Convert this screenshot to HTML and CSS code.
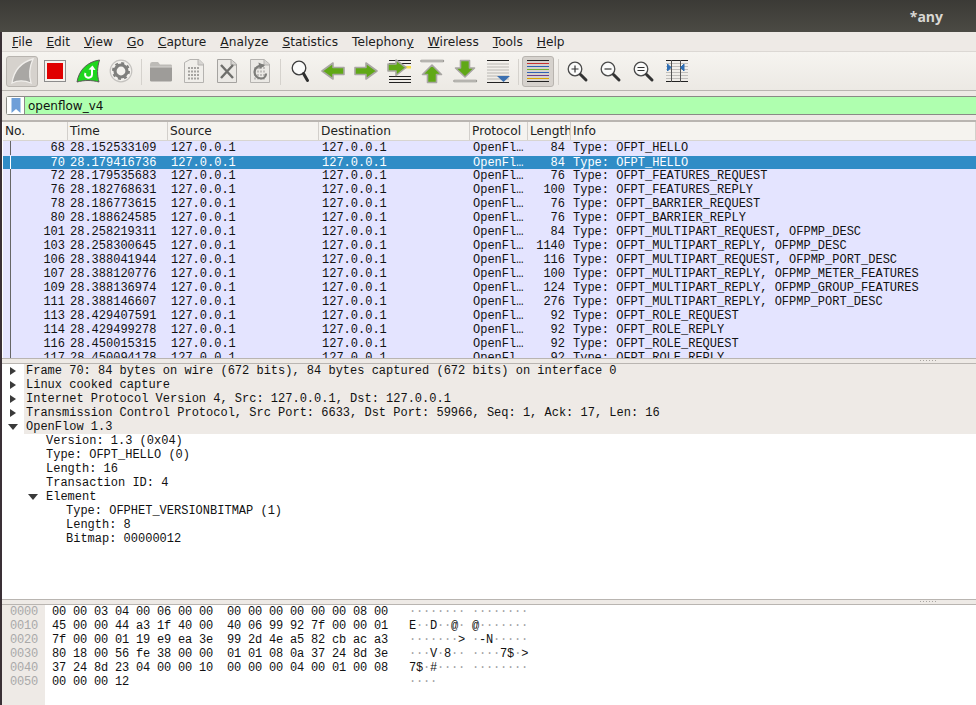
FILE: index.html
```html
<!DOCTYPE html>
<html lang="en">
<head>
    <meta charset="UTF-8">
    <meta name="viewport" content="width=device-width, initial-scale=1.0">
    <title>*any</title>
    <link rel="stylesheet" href="styles.css">
</head>
<body>
    <div class="title-bar"><span class="title-text">*any</span></div>

    <div class="window">
        <div class="menu-bar">
            <a class="menu-item"><u>F</u>ile</a>
            <a class="menu-item"><u>E</u>dit</a>
            <a class="menu-item"><u>V</u>iew</a>
            <a class="menu-item"><u>G</u>o</a>
            <a class="menu-item"><u>C</u>apture</a>
            <a class="menu-item"><u>A</u>nalyze</a>
            <a class="menu-item"><u>S</u>tatistics</a>
            <a class="menu-item">Telephon<u>y</u></a>
            <a class="menu-item"><u>W</u>ireless</a>
            <a class="menu-item"><u>T</u>ools</a>
            <a class="menu-item"><u>H</u>elp</a>
        </div>

        <div class="tool-bar">
            <!-- Start capture (disabled) -->
            <div class="tool toggled">
                <svg viewBox="0 0 32 31"><path d="M6 27C8 14 16 6 27 3C23 12 23 20 25 27C18 24 12 24 6 27Z" fill="#a9a7a4" stroke="#f0eeeb" stroke-width="1.3"/></svg>
            </div>
            <!-- Stop -->
            <div class="tool">
                <svg viewBox="0 0 32 31"><rect x="5.500" y="4.500" width="21" height="21" fill="#f4f2ee" stroke="#8c8c8c"/><rect x="8" y="7" width="16" height="16" fill="#e00000"/></svg>
            </div>
            <!-- Restart -->
            <div class="tool">
                <svg viewBox="0 0 32 31"><path d="M5 26C7 14 15 6 27.500 4C25 12 25 19 27 26C20 24 12 24 5 26Z" fill="#1ed61e" stroke="#5a5a56" stroke-width="1"/><path d="M20 12.500V18.500C20 21 17.500 22 15.500 21.500C13.500 21 12.500 19 13.500 17" fill="none" stroke="#fff" stroke-width="2"/><path d="M16.500 13.500L20.500 9.500L23.500 14Z" fill="#fff"/></svg>
            </div>
            <!-- Options -->
            <div class="tool">
                <svg viewBox="0 0 32 31"><circle cx="16" cy="15" r="10.800" fill="#f4f2ee" stroke="#c4c2bf" stroke-width="1.200"/><circle cx="16" cy="15" r="6" fill="none" stroke="#7f7f7d" stroke-width="3.200"/><circle cx="16" cy="15" r="8" fill="none" stroke="#7f7f7d" stroke-width="2" stroke-dasharray="3 3.280"/></svg>
            </div>
            <div class="tool-sep"></div>
            <!-- Open -->
            <div class="tool">
                <svg viewBox="0 0 32 31"><path d="M5 8.500Q5 6 7 6H13L15 8.500H26Q27 8.500 27 10V25H5Z" fill="#bdbbb7"/><path d="M5 11H27V24Q27 25.500 25.500 25.500H6.500Q5 25.500 5 24Z" fill="#9e9c99"/><path d="M5 11H27" stroke="#d5d3d0"/></svg>
            </div>
            <!-- Save -->
            <div class="tool">
                <svg viewBox="0 0 32 31"><path d="M6.500 6.500L12 3.500H21L25.500 8V26.500H6.500Z" fill="#f0eeea" stroke="#b5b3b0"/><path d="M20 3.500V9H25.500" fill="#d5d3d0" stroke="#b5b3b0"/><path d="M10 12H22M10 15.500H22M10 19H22M10 22.500H22" stroke="#a5a3a0" stroke-width="2" stroke-dasharray="2 1"/></svg>
            </div>
            <!-- Close -->
            <div class="tool">
                <svg viewBox="0 0 32 31"><path d="M6.500 3.500H20L25.500 8V26.500H6.500Z" fill="#ebe9e5" stroke="#a5a3a0"/><path d="M20 3.500V9H25.500" fill="#d5d3d0" stroke="#a5a3a0"/><path d="M10 9L22 22M22 9L10 22" stroke="#6f6f6c" stroke-width="2.400"/></svg>
            </div>
            <!-- Reload -->
            <div class="tool">
                <svg viewBox="0 0 32 31"><path d="M6.500 3.500H20L25.500 8V26.500H6.500Z" fill="#ebe9e5" stroke="#b5b3b0"/><path d="M20 3.500V9H25.500" fill="#d5d3d0" stroke="#b5b3b0"/><path d="M10 12H22M10 15.500H22M10 19H22M10 22.500H22" stroke="#c0bebb" stroke-width="2" stroke-dasharray="2 1"/><path d="M20 9.500C15 8.500 10.500 12 10.500 16C10.500 20 14 22.500 17 22.500C20 22.500 22 20 22 17.500" fill="none" stroke="#7d7d7a" stroke-width="2.200"/><path d="M14.500 6.500L21 9.500L15.500 13Z" fill="#7d7d7a"/></svg>
            </div>
            <div class="tool-sep"></div>
            <!-- Find -->
            <div class="tool">
                <svg viewBox="0 0 32 31"><circle cx="15" cy="12" r="6.800" fill="#fbfbfa" stroke="#3c3c3c" stroke-width="1.300"/><path d="M19.500 17.500L23.500 24.500" stroke="#2e2e2e" stroke-width="3" stroke-linecap="round"/></svg>
            </div>
            <!-- Back -->
            <div class="tool">
                <svg viewBox="0 0 32 31"><path d="M27 11.500H16V7L5 15L16 23V18.500H27Z" fill="#60a816" stroke="#a8a6a2" stroke-width="1.600" stroke-linejoin="round"/></svg>
            </div>
            <!-- Forward -->
            <div class="tool">
                <svg viewBox="0 0 32 31"><path d="M5 11.500H16V7L27 15L16 23V18.500H5Z" fill="#60a816" stroke="#a8a6a2" stroke-width="1.600" stroke-linejoin="round"/></svg>
            </div>
            <!-- Go to packet -->
            <div class="tool">
                <svg viewBox="0 0 32 31"><path d="M6 4.500H28M6 7.500H28M6 20.500H28M6 23.500H28M6 26.500H28" stroke="#222" stroke-width="1.200"/><path d="M21 10H28V12.500H21Z" fill="#f6e04a"/><path d="M5 8H13V4L23 11.500L13 19.500V15H5Z" fill="#60a816" stroke="#a8a6a2" stroke-width="1.600" stroke-linejoin="round"/></svg>
            </div>
            <!-- First packet -->
            <div class="tool">
                <svg viewBox="0 0 32 31"><path d="M5.500 5H27" stroke="#8c8a86" stroke-width="2.400" stroke-linecap="round"/><path d="M5.500 5H27" stroke="#f4f2ee" stroke-width="0.800" stroke-linecap="round"/><path d="M16 9L25.500 18.500H20.500V26.500H11.500V18.500H6.500Z" fill="#60a816" stroke="#a8a6a2" stroke-width="1.600" stroke-linejoin="round"/></svg>
            </div>
            <!-- Last packet -->
            <div class="tool">
                <svg viewBox="0 0 32 31"><path d="M5.500 25H27" stroke="#8c8a86" stroke-width="2.400" stroke-linecap="round"/><path d="M5.500 25H27" stroke="#f4f2ee" stroke-width="0.800" stroke-linecap="round"/><path d="M16 21L25.500 12H20.500V4.500H11.500V12H6.500Z" fill="#60a816" stroke="#a8a6a2" stroke-width="1.600" stroke-linejoin="round"/></svg>
            </div>
            <!-- Auto scroll -->
            <div class="tool">
                <svg viewBox="0 0 32 31"><path d="M5 4.500H27M5 26.500H27" stroke="#222" stroke-width="1.200"/><path d="M5 8H27M5 11H27M5 14H27M5 17H27M5 20H27M5 23H27" stroke="#b8b6b2"/><path d="M15 20H28L21.500 26Z" fill="#3a6fb0"/></svg>
            </div>
            <div class="tool-sep"></div>
            <!-- Colorize -->
            <div class="tool toggled">
                <svg viewBox="0 0 32 31"><path d="M5 4.500H27" stroke="#222"/><path d="M5 7.500H27" stroke="#c83232"/><path d="M5 10.500H27" stroke="#2f62b5"/><path d="M5 13.500H27" stroke="#73b32e"/><path d="M5 16.500H27" stroke="#2f62b5"/><path d="M5 19.500H27" stroke="#6b3f90"/><path d="M5 22.500H27" stroke="#d9a400"/><path d="M5 25.500H27" stroke="#222"/></svg>
            </div>
            <div class="tool-sep"></div>
            <!-- Zoom in -->
            <div class="tool">
                <svg viewBox="0 0 32 31"><circle cx="13" cy="13" r="6.800" fill="#fbfbfa" stroke="#4a4a4a" stroke-width="1.300"/><path d="M9.500 13H16.500M13 9.500V16.500" stroke="#333" stroke-width="1.200"/><path d="M18.500 18.500L24 24" stroke="#333" stroke-width="3" stroke-linecap="round"/></svg>
            </div>
            <!-- Zoom out -->
            <div class="tool">
                <svg viewBox="0 0 32 31"><circle cx="13" cy="13" r="6.800" fill="#fbfbfa" stroke="#4a4a4a" stroke-width="1.300"/><path d="M9.500 13H16.500" stroke="#333" stroke-width="1.200"/><path d="M18.500 18.500L24 24" stroke="#333" stroke-width="3" stroke-linecap="round"/></svg>
            </div>
            <!-- Normal size -->
            <div class="tool">
                <svg viewBox="0 0 32 31"><circle cx="13" cy="13" r="6.800" fill="#fbfbfa" stroke="#4a4a4a" stroke-width="1.300"/><path d="M9.500 11.500H16.500M9.500 14.500H16.500" stroke="#333" stroke-width="1.200"/><path d="M18.500 18.500L24 24" stroke="#333" stroke-width="3" stroke-linecap="round"/></svg>
            </div>
            <!-- Resize columns -->
            <div class="tool">
                <svg viewBox="0 0 32 31"><path d="M5 7.500H27M5 10.500H27M5 13.500H27M5 16.500H27M5 19.500H27M5 22.500H27" stroke="#c0bebb"/><path d="M5 4.500H27M5 25.500H27" stroke="#222" stroke-width="1.200"/><path d="M10.500 4V26M19.500 4V26" stroke="#555" stroke-width="1"/><path d="M6.500 8V15L10 11.500ZM23 8V15L19.500 11.500Z" fill="#2f6fb5" stroke="#2f6fb5"/></svg>
            </div>
        </div>

        <div class="filter-bar">
            <div class="filter-box">
                <div class="filter-mark">
                    <svg viewBox="0 0 10 15"><path d="M0.500 0H9.500V15L5 11L0.500 15Z" fill="#6f9fd8"/></svg>
                </div>
                <div class="filter-text">openflow_v4</div>
            </div>
        </div>

        <div class="packet-pane">
            <div class="col-head">
                <div class="head-cell">No.</div>
                <div class="head-cell">Time</div>
                <div class="head-cell">Source</div>
                <div class="head-cell">Destination</div>
                <div class="head-cell">Protocol</div>
                <div class="head-cell">Length</div>
                <div class="head-cell">Info</div>
            </div>
            <div class="packet-list">
                <div class="packet"><span class="c-no">68</span><span class="c-time">28.152533109</span><span>127.0.0.1</span><span>127.0.0.1</span><span>OpenFl…</span><span class="c-len">84</span><span>Type: OFPT_HELLO</span></div>
                <div class="packet selected"><span class="c-no">70</span><span class="c-time">28.179416736</span><span>127.0.0.1</span><span>127.0.0.1</span><span>OpenFl…</span><span class="c-len">84</span><span>Type: OFPT_HELLO</span></div>
                <div class="packet"><span class="c-no">72</span><span class="c-time">28.179535683</span><span>127.0.0.1</span><span>127.0.0.1</span><span>OpenFl…</span><span class="c-len">76</span><span>Type: OFPT_FEATURES_REQUEST</span></div>
                <div class="packet"><span class="c-no">76</span><span class="c-time">28.182768631</span><span>127.0.0.1</span><span>127.0.0.1</span><span>OpenFl…</span><span class="c-len">100</span><span>Type: OFPT_FEATURES_REPLY</span></div>
                <div class="packet"><span class="c-no">78</span><span class="c-time">28.186773615</span><span>127.0.0.1</span><span>127.0.0.1</span><span>OpenFl…</span><span class="c-len">76</span><span>Type: OFPT_BARRIER_REQUEST</span></div>
                <div class="packet"><span class="c-no">80</span><span class="c-time">28.188624585</span><span>127.0.0.1</span><span>127.0.0.1</span><span>OpenFl…</span><span class="c-len">76</span><span>Type: OFPT_BARRIER_REPLY</span></div>
                <div class="packet"><span class="c-no">101</span><span class="c-time">28.258219311</span><span>127.0.0.1</span><span>127.0.0.1</span><span>OpenFl…</span><span class="c-len">84</span><span>Type: OFPT_MULTIPART_REQUEST, OFPMP_DESC</span></div>
                <div class="packet"><span class="c-no">103</span><span class="c-time">28.258300645</span><span>127.0.0.1</span><span>127.0.0.1</span><span>OpenFl…</span><span class="c-len">1140</span><span>Type: OFPT_MULTIPART_REPLY, OFPMP_DESC</span></div>
                <div class="packet"><span class="c-no">106</span><span class="c-time">28.388041944</span><span>127.0.0.1</span><span>127.0.0.1</span><span>OpenFl…</span><span class="c-len">116</span><span>Type: OFPT_MULTIPART_REQUEST, OFPMP_PORT_DESC</span></div>
                <div class="packet"><span class="c-no">107</span><span class="c-time">28.388120776</span><span>127.0.0.1</span><span>127.0.0.1</span><span>OpenFl…</span><span class="c-len">100</span><span>Type: OFPT_MULTIPART_REPLY, OFPMP_METER_FEATURES</span></div>
                <div class="packet"><span class="c-no">109</span><span class="c-time">28.388136974</span><span>127.0.0.1</span><span>127.0.0.1</span><span>OpenFl…</span><span class="c-len">124</span><span>Type: OFPT_MULTIPART_REPLY, OFPMP_GROUP_FEATURES</span></div>
                <div class="packet"><span class="c-no">111</span><span class="c-time">28.388146607</span><span>127.0.0.1</span><span>127.0.0.1</span><span>OpenFl…</span><span class="c-len">276</span><span>Type: OFPT_MULTIPART_REPLY, OFPMP_PORT_DESC</span></div>
                <div class="packet"><span class="c-no">113</span><span class="c-time">28.429407591</span><span>127.0.0.1</span><span>127.0.0.1</span><span>OpenFl…</span><span class="c-len">92</span><span>Type: OFPT_ROLE_REQUEST</span></div>
                <div class="packet"><span class="c-no">114</span><span class="c-time">28.429499278</span><span>127.0.0.1</span><span>127.0.0.1</span><span>OpenFl…</span><span class="c-len">92</span><span>Type: OFPT_ROLE_REPLY</span></div>
                <div class="packet"><span class="c-no">116</span><span class="c-time">28.450015315</span><span>127.0.0.1</span><span>127.0.0.1</span><span>OpenFl…</span><span class="c-len">92</span><span>Type: OFPT_ROLE_REQUEST</span></div>
                <div class="packet"><span class="c-no">117</span><span class="c-time">28.450094178</span><span>127.0.0.1</span><span>127.0.0.1</span><span>OpenFl…</span><span class="c-len">92</span><span>Type: OFPT_ROLE_REPLY</span></div>
            </div>
        </div>

        <div class="splitter"><div class="grip"></div></div>

        <div class="detail-pane">
            <div class="node top"><i class="arrow"></i><span>Frame 70: 84 bytes on wire (672 bits), 84 bytes captured (672 bits) on interface 0</span></div>
            <div class="node top"><i class="arrow"></i><span>Linux cooked capture</span></div>
            <div class="node top"><i class="arrow"></i><span>Internet Protocol Version 4, Src: 127.0.0.1, Dst: 127.0.0.1</span></div>
            <div class="node top"><i class="arrow"></i><span>Transmission Control Protocol, Src Port: 6633, Dst Port: 59966, Seq: 1, Ack: 17, Len: 16</span></div>
            <div class="node top"><i class="arrow open"></i><span>OpenFlow 1.3</span></div>
            <div class="node level-1">Version: 1.3 (0x04)</div>
            <div class="node level-1">Type: OFPT_HELLO (0)</div>
            <div class="node level-1">Length: 16</div>
            <div class="node level-1">Transaction ID: 4</div>
            <div class="node branch"><i class="arrow open"></i><span>Element</span></div>
            <div class="node level-2">Type: OFPHET_VERSIONBITMAP (1)</div>
            <div class="node level-2">Length: 8</div>
            <div class="node level-2">Bitmap: 00000012</div>
        </div>

        <div class="splitter"><div class="grip"></div></div>

        <div class="hex-pane">
            <div class="hex-offsets">0000
0010
0020
0030
0040
0050</div>
            <div class="hex-bytes">00 00 03 04 00 06 00 00  00 00 00 00 00 00 08 00
45 00 00 44 a3 1f 40 00  40 06 99 92 7f 00 00 01
7f 00 00 01 19 e9 ea 3e  99 2d 4e a5 82 cb ac a3
80 18 00 56 fe 38 00 00  01 01 08 0a 37 24 8d 3e
37 24 8d 23 04 00 00 10  00 00 00 04 00 01 00 08
00 00 00 12</div>
            <div class="hex-ascii"><b>········ ········</b>
E<b>··</b>D<b>··</b>@<b>·</b> @<b>·······</b>
<b>·······</b>&gt; <b>·</b>-N<b>·····</b>
<b>···</b>V<b>·</b>8<b>··</b> <b>····</b>7$<b>·</b>&gt;
7$<b>·</b>#<b>····</b> <b>········</b>
<b>····</b></div>
        </div>
    </div>
</body>
</html>
```

FILE: styles.css
```css
* {
    margin: 0;
    padding: 0;
    box-sizing: border-box;
}

html, body {
    height: 100%;
    width: 100%;
}

body {
    background: #3a3036;
    display: flex;
    flex-direction: column;
    overflow: hidden;
    font-family: "DejaVu Sans", sans-serif;
    font-size: 12.2px;
    color: #000;
}

.title-bar {
    height: 32px;
    flex: none;
    display: flex;
    align-items: center;
    justify-content: flex-end;
    padding-right: 33px;
    background: linear-gradient(#3b3a36, #4b4a44);
}

.title-text {
    color: #d9d7d2;
    font-family: "Open Sans", sans-serif;
    font-size: 14px;
    font-weight: 700;
}

.window {
    flex: 1;
    min-height: 0;
    margin-left: 2px;
    background: #fff;
    display: flex;
    flex-direction: column;
}

/* Menu and tool bars */
.menu-bar {
    height: 20px;
    flex: none;
    display: flex;
    align-items: center;
    padding: 1px 0 0 3px;
    background: #eeeae6;
    border-bottom: 1px solid #dcd8d4;
}

.menu-item {
    padding: 0 7px;
    line-height: 18px;
    color: #1c1c1c;
}

.tool-bar {
    height: 39px;
    flex: none;
    display: flex;
    gap: 1px;
    padding: 4px 0 0 4px;
    background: linear-gradient(#f6f4f0, #ece9e4);
    border-bottom: 1px solid #b9b5b1;
}

.tool {
    width: 32px;
    height: 31px;
    border: 1px solid transparent;
    border-radius: 3px;
}

.tool svg {
    display: block;
    width: 32px;
    height: 31px;
    margin: -1px;
}

.tool.toggled {
    background: #d6d2cd;
    border-color: #b8b4af;
}

.tool-sep {
    width: 6px;
    display: flex;
    justify-content: center;
    margin: 3px 0 5px;
}

.tool-sep::before {
    content: "";
    width: 1px;
    background: #d5d2cd;
}

/* Display filter */
.filter-bar {
    height: 31px;
    flex: none;
    padding: 5px 0 5px 4px;
    background: #eeeae6;
    border-bottom: 2px solid #b9b5b1;
}

.filter-box {
    height: 19px;
    display: flex;
    border: 1px solid #8a8a86;
    border-right: none;
    border-radius: 3px 0 0 3px;
    background: #afffaf;
}

.filter-mark {
    width: 18px;
    flex: none;
    display: flex;
    align-items: center;
    justify-content: center;
    background: #fff;
    border-right: 1px solid #8a8a86;
}

.filter-mark svg {
    width: 10px;
    height: 15px;
}

.filter-text {
    padding: 1px 0 0 3px;
    font-size: 12px;
    line-height: 16px;
    color: #111;
}

/* Packet list */
.packet-pane {
    height: 236px;
    flex: none;
    overflow: hidden;
    padding-left: 1px;
}

.col-head, .packet {
    display: grid;
    grid-template-columns: 65px 100px 151px 151px 58px 43px 1fr;
}

.col-head {
    height: 19px;
    background: #f5f3ef;
    border-bottom: 1px solid #d8d5d1;
}

.head-cell {
    padding: 1px 0 0 2px;
    line-height: 17px;
    color: #222;
    overflow: hidden;
    white-space: nowrap;
    border-right: 1px solid #d2cfcb;
}

.packet-list {
    height: 217px;
    overflow: hidden;
}

.packet {
    height: 14px;
    background: #e4e4ff;
    font-family: "Liberation Mono", monospace;
    font-size: 12px;
    line-height: 14px;
    color: #111;
    white-space: pre;
}

.packet span {
    padding-left: 3px;
    overflow: hidden;
}

.packet span:last-child {
    padding-left: 2px;
}

.packet .c-time {
    padding-left: 2px;
}

.packet .c-no {
    padding-right: 3px;
    text-align: right;
    background: linear-gradient(#666, #666) 7px 0 / 1px 100% no-repeat;
}

.packet .c-len {
    padding-right: 6px;
    text-align: right;
}

.packet.selected {
    background: #308cc6;
    border-top: 1px solid #e4e4ff;
    color: #fff;
}

.packet.selected .c-no {
    background-image: linear-gradient(#fff, #fff);
}

.splitter {
    height: 6px;
    flex: none;
    display: flex;
    justify-content: flex-end;
    padding: 1px 38px 0 0;
    background: #eeeae6;
    border-top: 1px solid #b9b5b1;
    border-bottom: 1px solid #b9b5b1;
}

.grip {
    width: 18px;
    height: 1px;
    background: repeating-linear-gradient(90deg, #a8a5a1 0 1px, transparent 1px 3px);
}

/* Packet details */
.detail-pane {
    height: 235px;
    flex: none;
    overflow: hidden;
    font-family: "Liberation Mono", monospace;
    font-size: 12px;
    line-height: 14px;
    color: #111;
}

.node {
    height: 14px;
    display: flex;
    align-items: center;
    white-space: pre;
}

.node.top span {
    flex: 1;
    padding-left: 2px;
    background: #eeeae6;
}

.node.top .arrow {
    margin: 0 8px 0 8px;
}

.node.top .arrow.open {
    margin: 0 6px 0 6px;
}

.node.level-1 {
    padding-left: 44px;
}

.node.level-2 {
    padding-left: 64px;
}

.node.branch {
    padding-left: 26px;
}

.node.branch span {
    padding-left: 8px;
}

.arrow {
    width: 0;
    height: 0;
    flex: none;
    border-style: solid;
    border-width: 4px 0 4px 6px;
    border-color: transparent transparent transparent #3a3a3a;
}

.arrow.open {
    border-width: 6px 5px 0 5px;
    border-color: #3a3a3a transparent transparent transparent;
}

/* Hex dump */
.hex-pane {
    flex: 1;
    min-height: 0;
    display: flex;
    font-family: "Liberation Mono", monospace;
    font-size: 12px;
    line-height: 14px;
    letter-spacing: -0.2px;
    color: #111;
    white-space: pre;
    overflow: hidden;
}

.hex-offsets {
    width: 43px;
    padding-left: 8px;
    background: #eeeae6;
    color: #a9a9a9;
}

.hex-bytes {
    width: 364px;
    padding-left: 7px;
}

.hex-ascii b {
    font-weight: 400;
    color: #a3a3a3;
}
```
